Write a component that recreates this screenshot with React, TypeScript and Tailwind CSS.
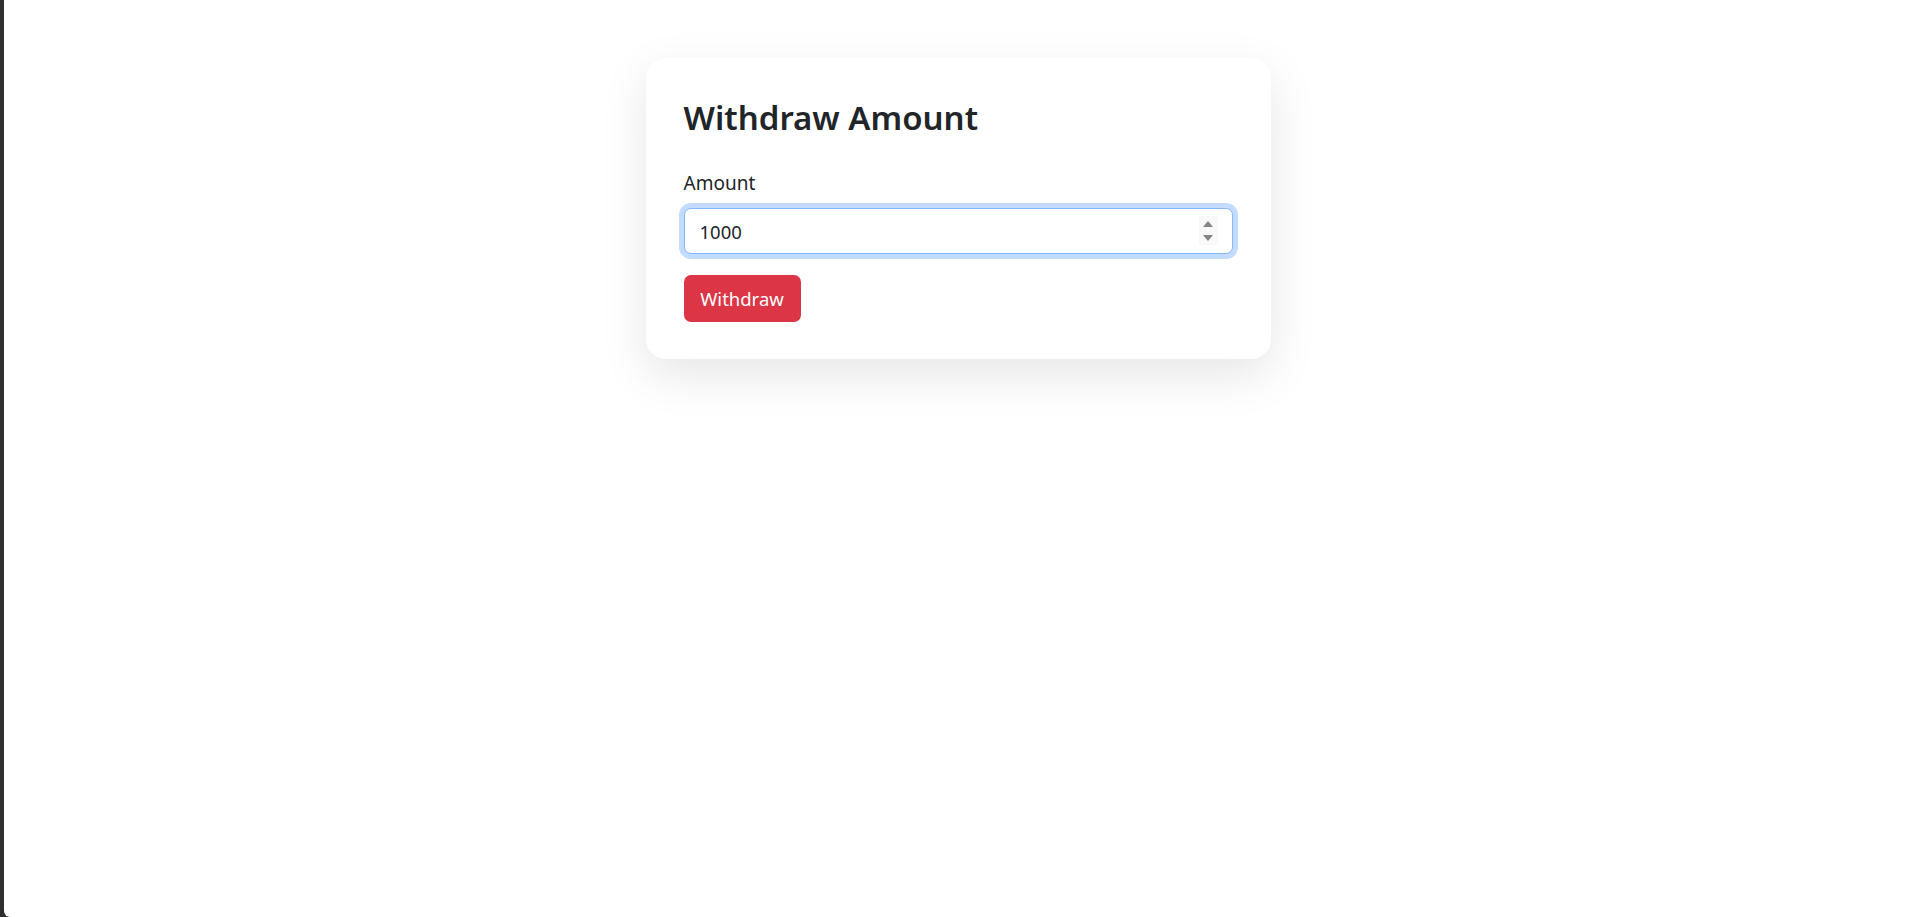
import React from 'react'

export default function App() {
  return (
    <div className="flex min-h-screen bg-[#2e2e2e]" style={{ fontFamily: '"Noto Sans", "Open Sans", sans-serif' }}>
      <div className="w-[4px] shrink-0" />
      <main className="flex-1 bg-white rounded-bl-[6px]">
        <div className="mx-auto mt-[58px] w-[625px] rounded-[20px] bg-white px-[38px] pt-[36px] pb-[37px] shadow-[0_16px_48px_rgba(0,0,0,0.1)]">
          <h2 className="mb-[28px] text-[33px] font-semibold leading-[47px] text-[#212529]">
            Withdraw Amount
          </h2>
          <form className="mb-[21px]" onSubmit={(e) => e.preventDefault()}>
            <label htmlFor="amount" className="mb-[10px] block text-[19px] leading-[29px] text-[#212529]">
              Amount
            </label>
            <div className="relative">
              <input
                id="amount"
                type="text"
                defaultValue="1000"
                className="block h-[46px] w-full rounded-[7px] border border-[#86b7fe] bg-white px-[15px] text-[18.5px] text-[#212529] shadow-[0_0_0_5px_rgba(13,110,253,0.25)] outline-none"
              />
              <div className="absolute right-[15px] top-[8px] flex h-[29px] w-[19px] flex-col items-center justify-center gap-[8px] bg-[#f9f9f9]">
                <span className="h-0 w-0 border-x-[5px] border-b-[6px] border-x-transparent border-b-[#858585]" />
                <span className="h-0 w-0 border-x-[5px] border-t-[6px] border-x-transparent border-t-[#858585]" />
              </div>
            </div>
          </form>
          <button
            type="button"
            className="h-[47px] w-[117px] rounded-[7px] bg-[#dc3545] text-[18.5px] text-white"
          >
            Withdraw
          </button>
        </div>
      </main>
    </div>
  )
}
